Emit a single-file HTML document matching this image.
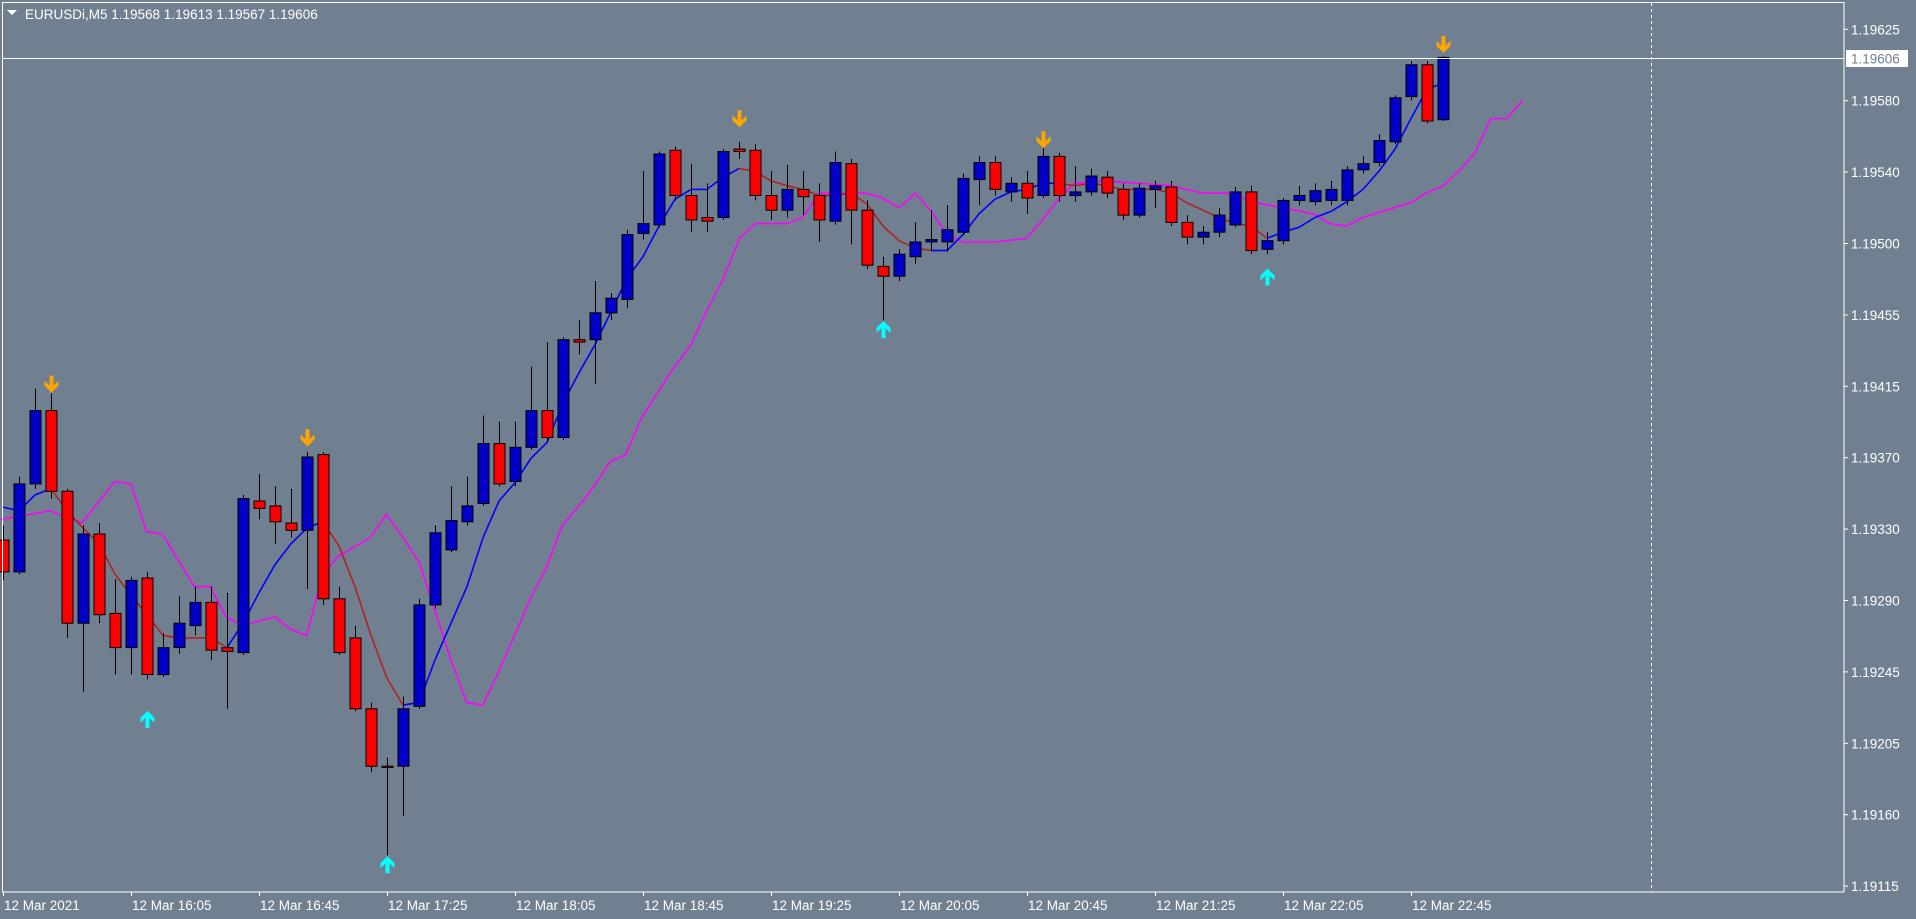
<!DOCTYPE html>
<html><head><meta charset="utf-8"><style>
html,body{margin:0;padding:0;background:#708090;width:1916px;height:919px;overflow:hidden}
svg{display:block}
text{font-family:"Liberation Sans",Tahoma,sans-serif;font-size:13.5px;fill:#fff}
</style></head><body>
<svg id="s" width="1916" height="919" xmlns="http://www.w3.org/2000/svg">
<rect width="1916" height="919" fill="#708090"/>
</svg>
<script>
const S=document.getElementById('s');const K=1.222;
let h='';
const C=[
['r',442,468,430,475],['b',396,468,390,470],['b',336,396,318,400],['r',336,402,322,408],['r',402,510,400,522],
['b',437,510,430,566],['r',437,503,428,510],['r',502,530,474,552],['b',475,530,472,552],['r',473,552,468,556],
['b',530,552,518,554],['b',510,530,488,535],['b',493,512,480,520],['r',493,532,480,540],['r',530,533,485,580],
['b',408,534,405,536],['r',410,416,388,425],['r',414,427,398,445],['r',428,434,400,440],['b',374,434,370,482],
['r',372,490,370,495],['r',490,534,480,536],['r',522,580,512,582],['r',580,627,575,632],['r',627,628,620,700],
['b',580,627,570,668],['b',495,578,490,580],['b',436,495,430,498],['b',426,450,398,452],['b',414,427,390,430],
['b',363,412,340,414],['r',363,396,345,398],['b',366,394,345,398],['b',336,366,300,368],['r',336,358,280,362],
['b',278,358,276,360],['r',278,280,262,290],['b',256,278,230,314],['b',244,256,240,262],['b',192,245,188,252],
['b',183,191,140,196],['b',126,184,124,186],['r',123,160,120,164],['r',160,180,134,190],['r',178,181,150,190],
['b',124,178,122,180],['r',122,124,116,130],['r',123,160,118,164],['r',160,172,140,180],['b',155,172,135,178],
['r',155,161,140,176],['r',160,180,150,198],['b',133,181,124,184],['r',134,172,130,200],['r',172,217,164,220],
['r',218,226,210,262],['b',208,226,204,230],['b',198,210,182,216],['b',196,198,172,205],['b',188,198,168,206],
['b',146,190,142,192],['b',133,147,128,168],['r',133,155,128,160],['b',150,157,145,165],['r',150,162,140,175],
['b',128,160,118,162],['r',128,160,125,165],['b',157,160,136,165],['b',144,157,138,160],['r',145,158,140,162],
['r',155,176,150,180],['b',154,176,150,178],['b',152,155,148,170],['r',153,182,148,185],['r',182,194,176,200],
['b',190,194,185,200],['b',176,190,170,194],['b',157,184,153,186],['r',157,205,152,208],['b',197,204,190,208],
['b',164,197,162,200],['b',160,164,152,168],['b',156,165,150,168],['b',155,164,148,168],['b',139,164,136,168],
['b',134,139,128,142],['b',115,133,110,136],['b',80,116,78,118],['b',53,79,50,82],['r',53,99,50,101],['b',47,98,46,99]];
const X=i=>3+16*i;
const M=[[0,425],[41,418],[67,428],[94,394],[107,396],[120,435],[133,437],[159,480],[172,480],[185,505],[199,512],[212,508],[225,505],[238,515],[251,520],[264,470],[277,455],[303,440],[316,421],[330,440],[343,460],[356,500],[369,540],[382,575],[395,577],[408,550],[421,520],[434,490],[447,465],[460,430],[473,415],[486,398],[499,378],[512,372],[525,342],[539,320],[552,300],[565,283],[578,255],[592,228],[605,195],[618,183],[644,183],[657,178],[670,158],[683,158],[709,158],[722,162],[736,170],[749,158],[762,173],[775,192],[788,198],[814,198],[840,195],[853,180],[866,163],[879,150],[905,148],[932,150],[958,152],[984,158],[1010,158],[1023,165],[1049,170],[1075,175],[1088,183],[1102,185],[1115,178],[1141,170],[1154,166],[1167,158],[1181,152],[1194,140],[1207,125],[1220,97],[1233,97],[1246,82]];
h+='<polyline fill="none" stroke="#ff00ff" stroke-width="1.6" points="'+M.map(p=>(p[0]*K).toFixed(1)+','+(p[1]*K).toFixed(1)).join(' ')+'"/>';
const F=[415,418,405,400,418,432,445,470,487,503,520,522,522,522,530,510,485,462,445,432,427,447,480,520,555,577,575,540,510,480,440,410,395,375,362,330,305,282,255,228,210,185,163,155,155,145,138,140,148,152,155,160,160,158,167,185,197,203,205,205,192,175,163,157,155,150,150,152,150,152,155,155,155,158,166,172,178,183,185,195,190,186,178,173,165,155,140,122,97,73,68];
const red=i=>(i>=3&&i<14)||(i>=20&&i<25)||(i>=46&&i<58)||(i>=66&&i<79);
for(let i=0;i<F.length-1;i++){h+=`<line x1="${X(i)}" y1="${(F[i]*K).toFixed(1)}" x2="${X(i+1)}" y2="${(F[i+1]*K).toFixed(1)}" stroke="${red(i)?'#b22222':'#0000ff'}" stroke-width="1.6"/>`;}
C.forEach((c,i)=>{const x=X(i);const bt=c[1]*K,bb=c[2]*K,wt=c[3]*K,wb=c[4]*K;
h+=`<line x1="${x+0.5}" y1="${wt.toFixed(1)}" x2="${x+0.5}" y2="${wb.toFixed(1)}" stroke="#000" stroke-width="1"/>`;
h+=`<rect x="${x-5}" y="${bt.toFixed(1)}" width="11" height="${Math.max(1,bb-bt).toFixed(1)}" fill="${c[0]=='r'?'#ff0000':'#0000c8'}" stroke="#000" stroke-width="1"/>`;});
const down=(i,y)=>{const x=X(i)+0.5,Y=y*K;h+=`<path d="M${x-2} ${Y-13} h4 v10 l5 -5 v5 l-7 7 l-7 -7 v-5 l5 5z" fill="#ffa500"/>`;};
const up=(i,y)=>{const x=X(i)+0.5,Y=y*K;h+=`<path d="M${x-2} ${Y+13} h4 v-10 l5 5 v-5 l-7 -7 l-7 7 v5 l5 -5z" fill="#00ffff"/>`;};
down(3,318);down(19,362);down(46,101);down(65,118);down(90,40);
up(9,585);up(24,704);up(55,266);up(79,223);
h+='<rect x="2.5" y="2.5" width="1841.5" height="889.5" fill="none" stroke="#fff" stroke-width="1"/>';
h+='<line x1="2" y1="58.5" x2="1844" y2="58.5" stroke="#fff"/>';
h+='<line x1="1651.5" y1="3" x2="1651.5" y2="892" stroke="#fff" stroke-dasharray="3,3"/>';
const P=['1.19625','1.19580','1.19540','1.19500','1.19455','1.19415','1.19370','1.19330','1.19290','1.19245','1.19205','1.19160','1.19115'];
P.forEach((p,k)=>{const y=29.3+71.4*k;h+=`<line x1="1844" y1="${y}" x2="1848" y2="${y}" stroke="#fff"/><text x="1851" y="${y+5}">${p}</text>`;});
h+='<rect x="1846" y="50" width="62" height="17" fill="#fff"/><text x="1851" y="63.5" style="fill:#708090">1.19606</text>';
const T=['12 Mar 2021','12 Mar 16:05','12 Mar 16:45','12 Mar 17:25','12 Mar 18:05','12 Mar 18:45','12 Mar 19:25','12 Mar 20:05','12 Mar 20:45','12 Mar 21:25','12 Mar 22:05','12 Mar 22:45'];
T.forEach((t,k)=>{const x=3+128*k;h+=`<line x1="${x+0.5}" y1="892" x2="${x+0.5}" y2="896" stroke="#fff"/><text x="${x+1}" y="910">${t}</text>`;});
h+='<path d="M7 10 h10 l-5 5z" fill="#fff"/><text x="25" y="19">EURUSDi,M5  1.19568 1.19613 1.19567 1.19606</text>';
S.insertAdjacentHTML('beforeend',h);
</script>
</body></html>
